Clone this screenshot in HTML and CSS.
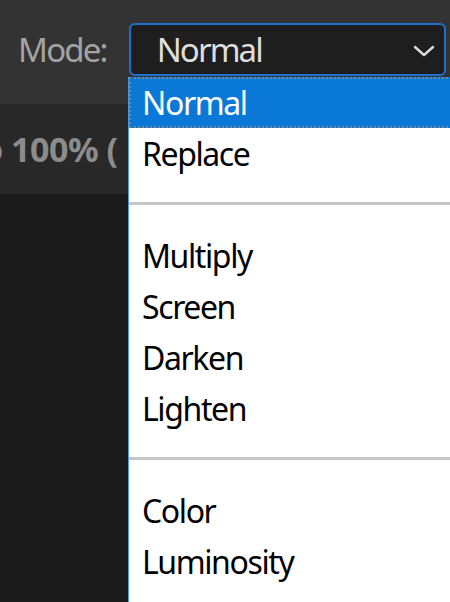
FILE: index.html
```html
<!DOCTYPE html>
<html lang="en">
<head>
<meta charset="utf-8">
<title>Mode</title>
<link rel="stylesheet" href="styles.css">
</head>
<body>
<div class="app">
  <div class="toolbar">
    <span class="mode-label">Mode:</span>
    <div class="select">
      <span class="select-value">Normal</span>
      <svg class="chevron" width="22" height="12" viewBox="0 0 22 12"><path d="M2 2 L11 10 L20 2" fill="none" stroke="#dcdcdc" stroke-width="2.4" stroke-linecap="round" stroke-linejoin="round"/></svg>
    </div>
  </div>
  <div class="optbar">
    <span class="opacity">o 100% (</span>
  </div>
  <div class="canvas"></div>

  <ul class="menu">
    <li class="item selected">Normal</li>
    <li class="item">Replace</li>
    <li class="sep"></li>
    <li class="item">Multiply</li>
    <li class="item">Screen</li>
    <li class="item">Darken</li>
    <li class="item">Lighten</li>
    <li class="sep"></li>
    <li class="item">Color</li>
    <li class="item">Luminosity</li>
  </ul>
</div>
</body>
</html>
```

FILE: styles.css
```css
* { box-sizing: border-box; }
html, body { margin: 0; padding: 0; }
body {
  background: #1b1b1b;
  font-family: "Noto Sans", "Open Sans", sans-serif;
  width: 450px;
  height: 602px;
  overflow: hidden;
}
.app {
  position: relative;
  width: 450px;
  height: 602px;
  overflow: hidden;
  display: flex;
  flex-direction: column;
}
.toolbar {
  height: 104px;
  background: #333333;
  display: flex;
  align-items: flex-start;
  padding: 23px 0 0 18px;
  gap: 22px;
}
.mode-label {
  color: #a3a3a3;
  font-size: 33px;
  line-height: 53px;
  letter-spacing: -1.8px;
}
.select {
  width: 317px;
  height: 53px;
  border: 2px solid #1f6fd0;
  border-radius: 6px;
  background: #1e1e1e;
  display: flex;
  align-items: center;
  justify-content: space-between;
  padding: 0 9px 0 26px;
}
.select-value {
  color: #dedede;
  font-size: 33px;
  line-height: 49px;
  letter-spacing: -1.9px;
}
.chevron { display: block; margin-top: 2px; }
.optbar {
  height: 90px;
  background: #282828;
  display: flex;
  align-items: center;
  overflow: hidden;
}
.opacity {
  color: #8c8c8c;
  font-weight: 700;
  font-size: 34px;
  margin-left: -18px;
  white-space: nowrap;
  letter-spacing: -0.5px;
}
.canvas { flex: 1; background: #1b1b1b; }

.menu {
  position: absolute;
  left: 128px;
  top: 77px;
  width: 340px;
  height: 540px;
  margin: 0;
  padding: 0;
  list-style: none;
  background: #ffffff;
  border-left: 1px solid #4a9de6;
}
.item {
  height: 51px;
  padding-left: 13px;
  font-size: 32px;
  line-height: 51px;
  letter-spacing: -1.4px;
  color: #000;
}
.item.selected {
  background: #0a78d7;
  color: #fff;
  border: 2px dotted #6f8796;
  border-right: none;
  padding-left: 11px;
  line-height: 47px;
}
.sep {
  height: 51px;
  padding-top: 23px;
}
.sep::before {
  content: "";
  display: block;
  height: 3px;
  background: #c6c6c6;
}
```
